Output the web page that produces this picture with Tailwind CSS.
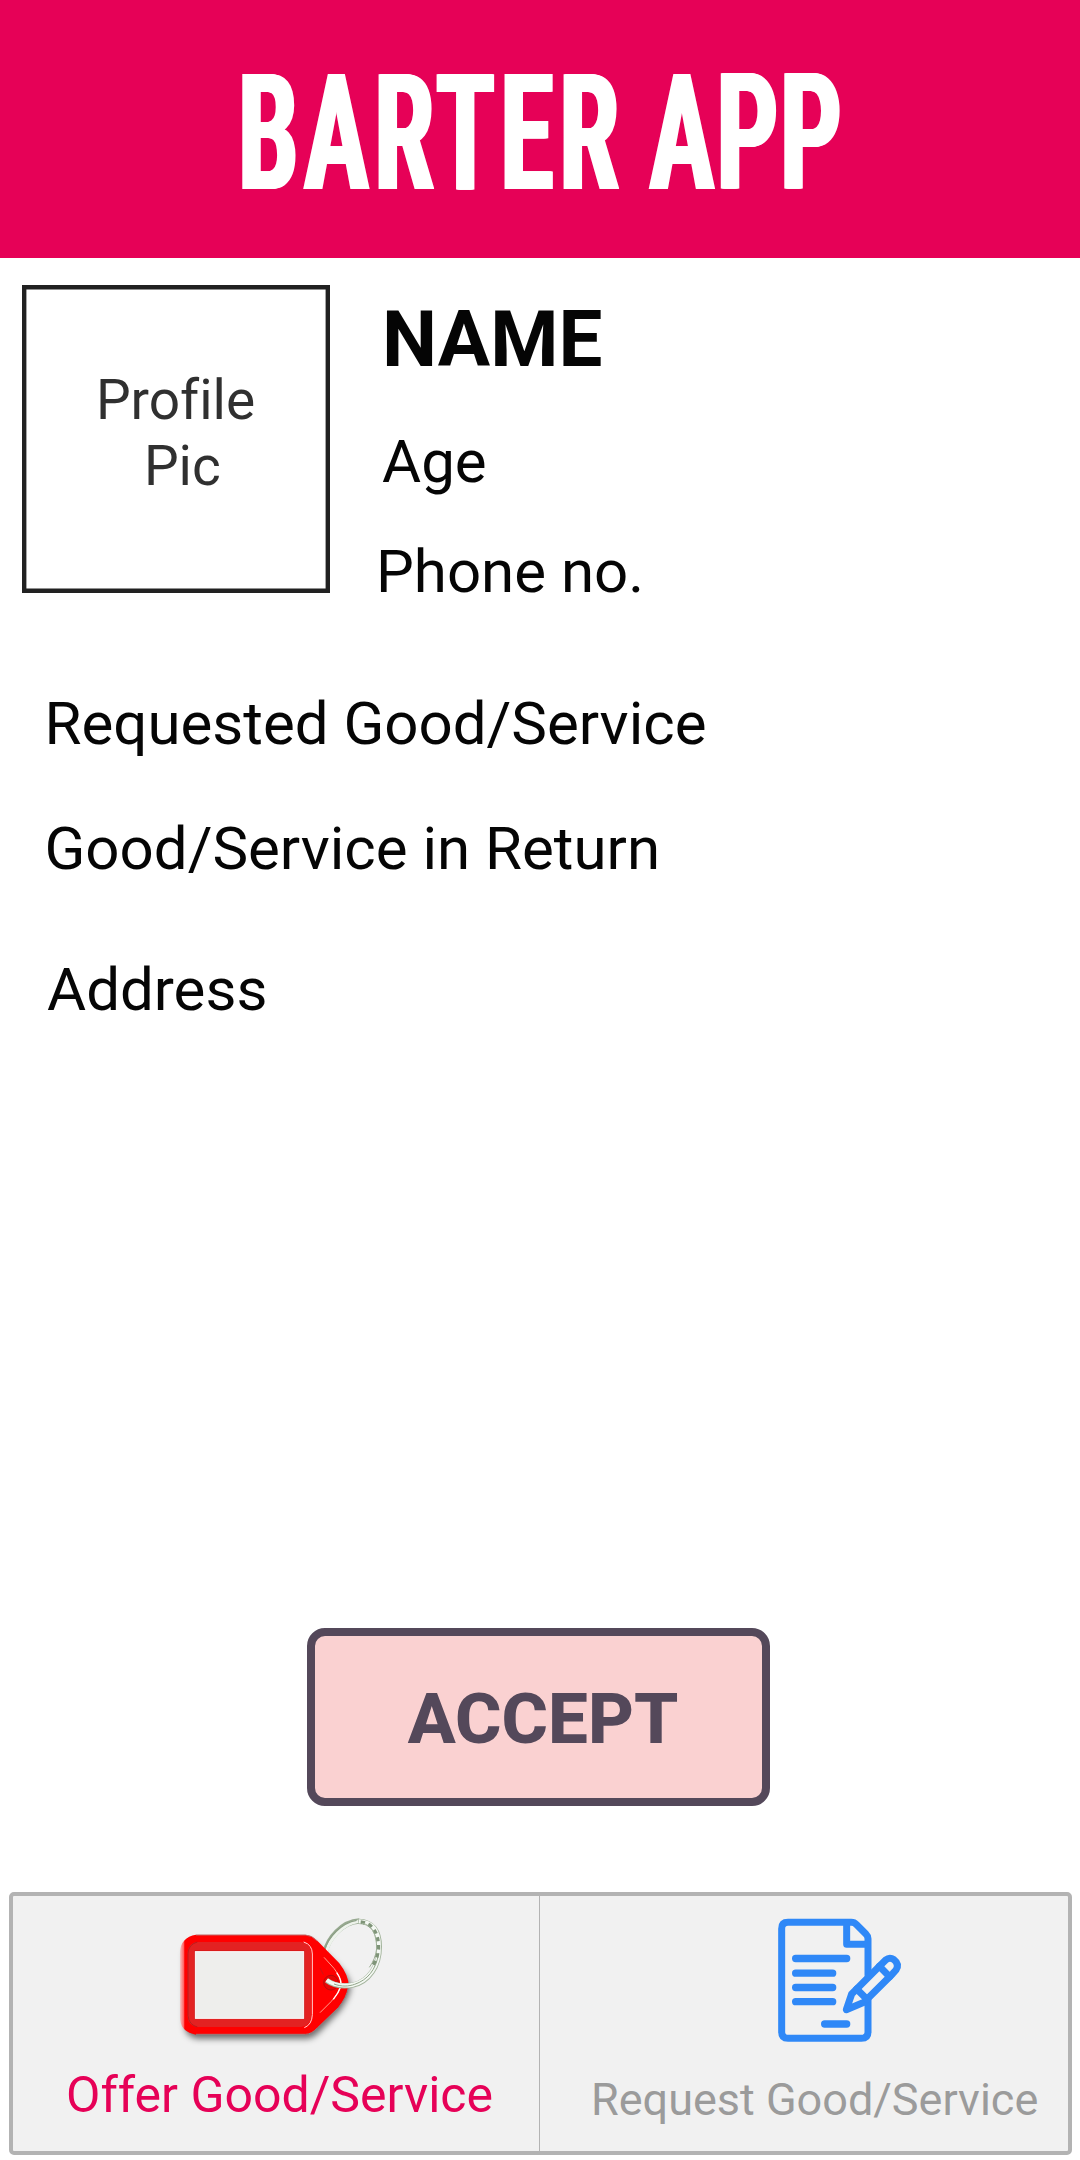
<!DOCTYPE html>
<html lang="en">
<head>
<meta charset="utf-8">
<title>Barter App</title>
<script src="https://cdn.jsdelivr.net/npm/@tailwindcss/browser@4"></script>
</head>
<body class="bg-white">
<div class="flex h-[2160px] w-[1080px] flex-col overflow-hidden bg-white font-['Roboto',sans-serif] text-[#050505]">

  <header class="flex h-[258px] shrink-0 justify-center bg-[#e60157] pt-[44px]">
    <h1 class="origin-center scale-x-[0.68] whitespace-nowrap text-[162px] leading-[180px] font-semibold text-white [font-stretch:75%] [text-shadow:3px_0_0_#fff,-3px_0_0_#fff,1.5px_0_0_#fff,-1.5px_0_0_#fff]"><span class="tracking-[7px]">BARTER</span> <span class="tracking-[2px]">APP</span></h1>
  </header>

  <main class="flex grow flex-col">
    <section class="flex pt-[27px] pl-[22px]">
      <div class="h-[308px] w-[308px] border-4 border-[#212121] pt-[78px] pr-px text-center text-[55px] leading-[66px] text-[#303030] shadow-[inset_0_0_0_0.4px_#212121] [font-variant-ligatures:none]">Profile<br>&nbsp;Pic</div>
      <div class="flex flex-col pt-[9.5px] pl-[46px] text-[60px] leading-[70px]">
        <p class="pl-[6px] text-[78px] leading-[90px] font-bold">NAME</p>
        <p class="mt-[42px] pl-[6px]">Age</p>
        <p class="mt-[40px]">Phone no.</p>
      </div>
    </section>

    <section class="flex flex-col pt-[82px] pl-[44.5px] text-[60px] leading-[70px]">
      <p>Requested Good/Service</p>
      <p class="mt-[55px]">Good/Service in Return</p>
      <p class="mt-[71px] pl-[2.5px]">Address</p>
    </section>

    <button class="mt-[603px] ml-[307px] h-[178px] w-[463px] rounded-[18px] border-8 border-[#54485a] bg-[#fad1d1] pt-[4px] pl-[9px] text-[71px] leading-[80px] font-extrabold text-[#54485a]">ACCEPT</button>
  </main>

  <nav class="mr-2 mb-[5px] ml-[9px] grid h-[263px] shrink-0 grid-cols-[527px_1fr] rounded-[5px] border-4 border-[#b3b3b3] bg-[#f1f1f1]">
    <a class="flex flex-col border-r border-[#b3b3b3] pt-1">
      <svg class="ml-[147px] h-[160px] w-[240px]" viewBox="0 0 720 480" fill="none">
        <defs>
          <filter id="sh" x="-20%" y="-20%" width="140%" height="140%"><feGaussianBlur stdDeviation="9"/></filter>
          <linearGradient id="edge" x1="60" x2="84" y1="0" y2="0" gradientUnits="userSpaceOnUse"><stop stop-color="#f5c4c4"/><stop offset=".45" stop-color="#f66"/><stop offset=".6" stop-color="#f00"/></linearGradient>
        </defs>
        <!-- drop shadow -->
        <path d="M112 122H436Q456 122 474 140L540 204Q572 236 572 262Q570 290 540 332L478 396Q458 416 440 416H112Q74 412 74 370V170Q74 126 112 122Z" fill="#000" fill-opacity=".55" filter="url(#sh)"/>
        <!-- back of the ring -->
        <path d="M496 156C504 116 545 66 598 63" stroke="#98aa91" stroke-width="16"/>
        <path d="M499 156C508 118 548 70 594 64" stroke="#eef3ec" stroke-width="10"/>
        <path d="M494 150C504 112 545 68 590 61" stroke="#8da086" stroke-width="4"/>
        <!-- tag body -->
        <path d="M108 104H436Q455 104 472 122L538 190Q566 226 566 258Q562 290 536 322L472 384Q454 404 436 404H108Q60 396 60 352V156Q62 112 108 104Z" fill="url(#edge)"/>
        <path d="M108 105H436Q455 105 472 123" stroke="#a39a9a" stroke-width="2"/>
        <path d="M108 403H436Q454 403 472 384L536 322Q560 292 565 262" stroke="#8f8686" stroke-width="3"/>
        <rect x="83" y="126" width="370" height="255" rx="30" fill="#e32222"/>
        <path d="M112 126Q84 134 84 162V346Q86 374 112 381" stroke="#a51c1c" stroke-width="2"/>
        <rect x="103" y="152" width="331" height="205" fill="#c80d0d"/>
        <rect x="106" y="155" width="325" height="200" fill="#eeeeec" stroke="#fff" stroke-width="3"/>
        <path d="M431 126Q457 134 457 162V344Q456 374 433 383" stroke="#ffd9d9" stroke-width="3"/>
        <path d="M492 172L522 205Q545 236 543 252Q540 274 514 304L480 338" stroke="#ff9d8c" stroke-width="3"/>
        <path d="M530 218Q546 240 542 260Q536 278 520 298" stroke="#fff" stroke-width="4"/>
        <path d="M480 204L490 224" stroke="#b02020" stroke-width="2"/>
        <circle cx="513" cy="248" r="22" fill="#e80606" stroke="#b80c0c" stroke-width="3"/>
        <!-- twisted ring -->
        <path d="M500 241C520 256 548 261 580 255C625 244 658 200 658 140C658 94 638 65 596 64" stroke="#a3b49c" stroke-width="16"/>
        <path d="M500 240C520 255 548 260 580 254C625 243 658 199 657 140C657 94 638 66 596 64" stroke="#f4f8f3" stroke-width="12"/>
        <path d="M522 252C546 261 566 259 584 253C622 240 648 210 656 160" stroke="#91a589" stroke-width="3"/>
        <path d="M602 66C638 70 656 100 655 146C653 166 647 184 636 200" stroke="#7f9478" stroke-width="11" stroke-dasharray="13 11"/>
        <path d="M606 70C634 74 650 100 650 146C648 166 640 186 628 202" stroke="#9cae95" stroke-width="3"/>
      </svg>
      <span class="mt-[4.5px] pl-[53px] text-[50px] leading-[60px] whitespace-nowrap text-[#e60157]">Offer Good/Service</span>
    </a>
    <a class="flex flex-col pt-1">
      <svg class="ml-[220px] h-[160px] w-[160px]" viewBox="0 0 480 480" fill="none" stroke="#2f88f7" stroke-width="21" stroke-linejoin="round" stroke-linecap="round">
        <path d="M324 225V116Q324 108 317 101L290 74Q283 67 274 67H84Q65 67 65 86V396Q65 415 84 415H304Q324 415 324 396V300"/>
        <path d="M260 70V133H322"/>
        <path d="M107 175.500H260M107 219.500H218M107 262.500H218M107 305H218M194 372H260" stroke-width="22"/>
        <path d="M259 329L275 282L377 180Q389 170 402 179Q419 192 408 210L398 221L312 307Z"/>
        <path d="M290 267L321 298M358 199L389 230"/>
      </svg>
      <span class="mt-[9.5px] pl-[51px] text-[45px] leading-[60px] whitespace-nowrap text-[#9b9b9b]">Request Good/Service</span>
    </a>
  </nav>
</div>
</body>
</html>
